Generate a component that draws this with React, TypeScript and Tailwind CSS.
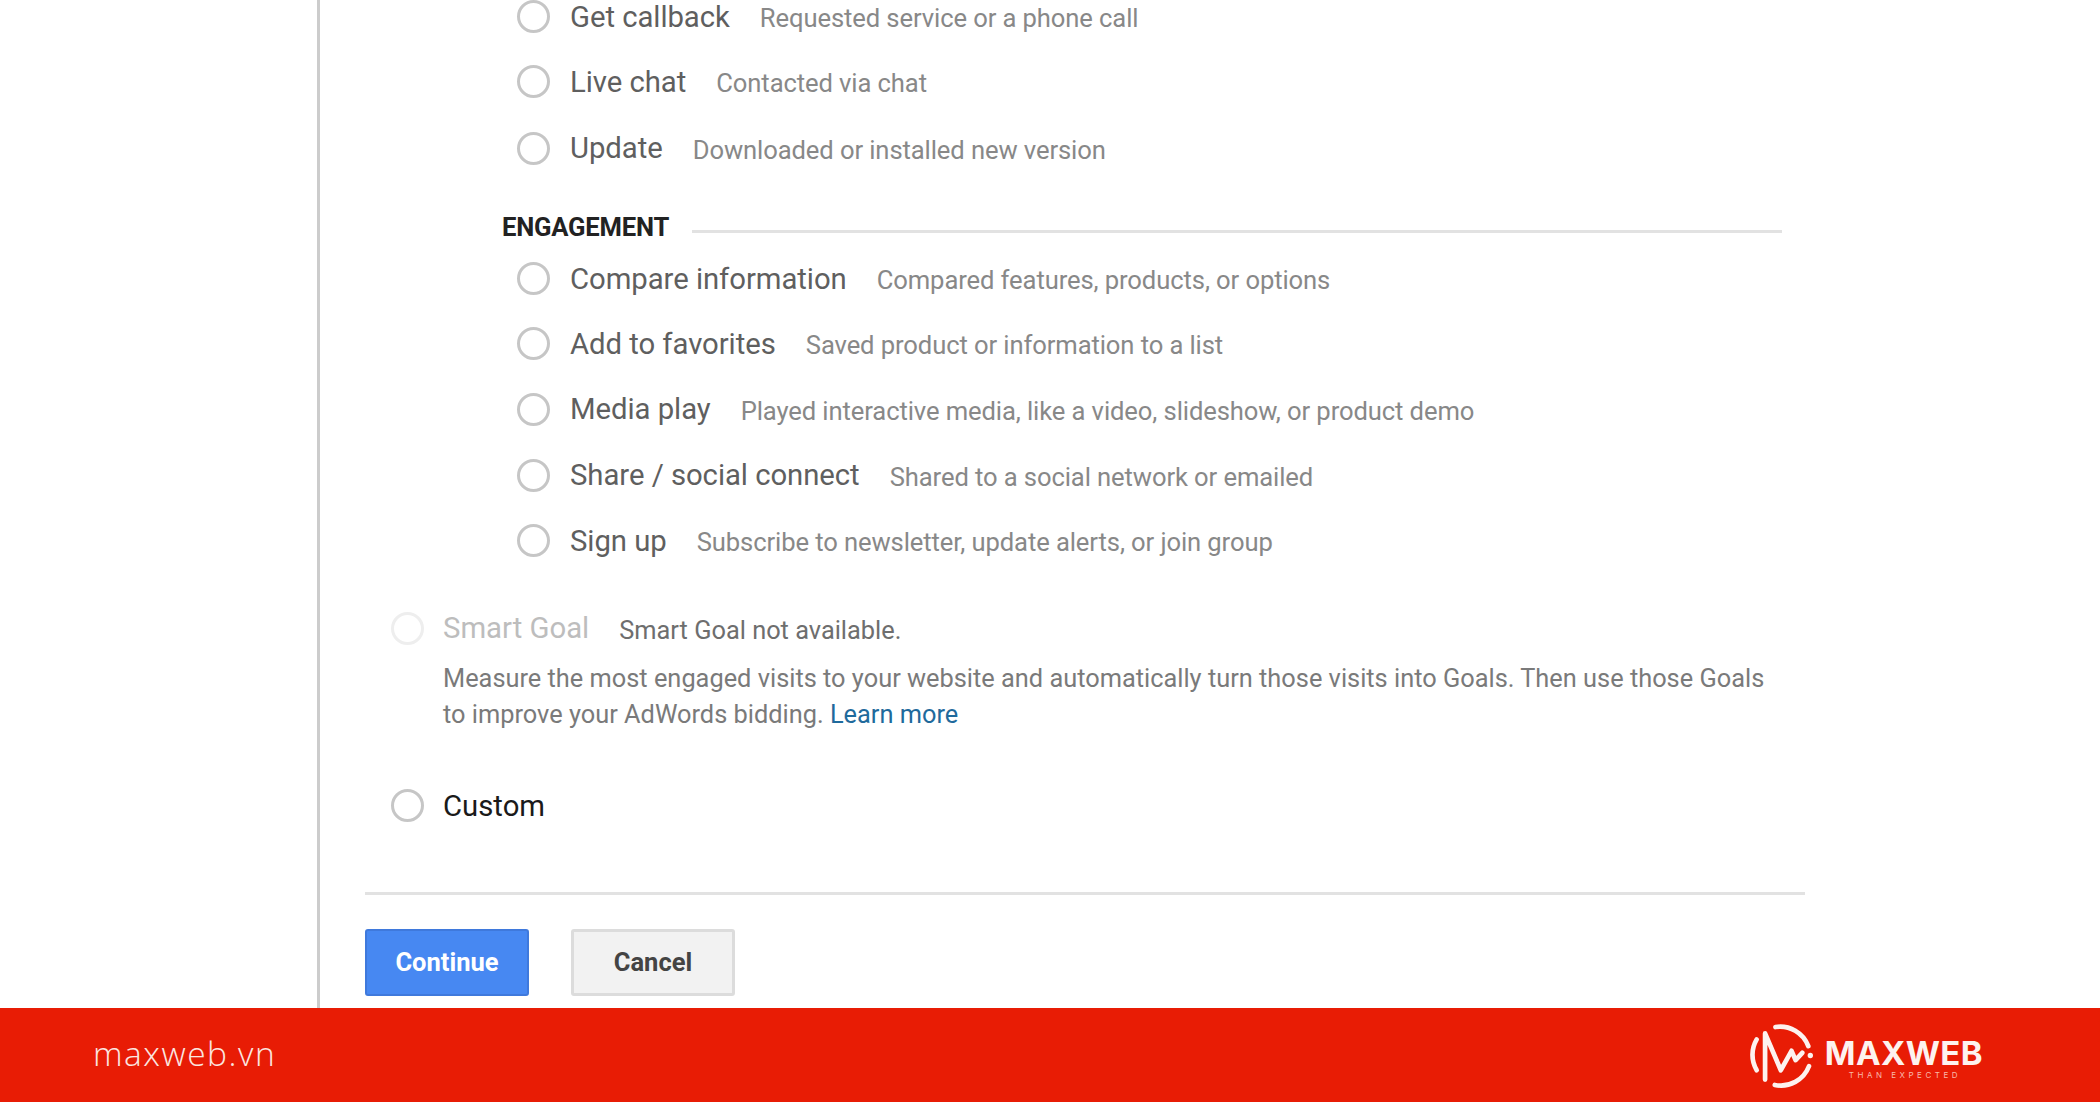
function Radio({ faint = false }: { faint?: boolean }) {
  return (
    <span
      className={`block h-[33px] w-[33px] shrink-0 rounded-full border-[3px] bg-white ${
        faint ? "border-[#eeeeee]" : "border-[#c6c6c6]"
      }`}
    />
  );
}

function Row({ label, desc, h }: { label: string; desc: string; h: string }) {
  return (
    <div className={`flex items-center pl-[15px] ${h}`}>
      <Radio />
      <span className="ml-[20px] mt-[2px] text-[29.3px] tracking-[-0.05px] text-[#5f5f5f]">{label}</span>
      <span className="ml-[30px] mt-[4px] text-[25.6px] tracking-[-0.1px] text-[#888888]">{desc}</span>
    </div>
  );
}

function Logo() {
  return (
    <svg viewBox="150 60 200 200" className="h-[67px] w-[67px] shrink-0" fill="none" stroke="#fdf2ef" strokeLinecap="round" strokeLinejoin="round">
      <path d="M232 75 A 90 90 0 0 1 330 132" strokeWidth="14" />
      <path d="M230 248 A 90 90 0 0 0 332 192" strokeWidth="14" />
      <path d="M176 112 A 90 90 0 0 0 176 204" strokeWidth="14" />
      <path d="M201 232 V 94 L 248 204 L 280 146 L 292 174 L 312 152" strokeWidth="14" />
      <circle cx="336" cy="160" r="8" fill="#fdf2ef" stroke="none" />
    </svg>
  );
}

export default function App() {
  return (
    <div className="flex h-[1102px] w-[2100px] flex-col overflow-hidden bg-white font-['Roboto',sans-serif]">
      <main className="flex min-h-0 flex-1">
        <aside className="h-full w-[320px] shrink-0 border-r-[3px] border-[#cccccc]" />
        <section className="w-[1485px] pl-[45px]">
          <div className="-mt-[16px] pl-[137px] pr-[23px]">
            <Row label="Get callback" desc="Requested service or a phone call" h="h-[65px]" />
            <Row label="Live chat" desc="Contacted via chat" h="h-[65px]" />
            <Row label="Update" desc="Downloaded or installed new version" h="h-[68px]" />
            <div className="mt-[29px] flex h-[32px] items-center">
              <span className="text-[25.6px] font-bold tracking-[-0.2px] text-[#222222]">ENGAGEMENT</span>
              <span className="ml-[23px] mt-[8px] h-[3px] flex-1 bg-[#e2e2e2]" />
            </div>
            <div className="mt-[3px]">
              <Row label="Compare information" desc="Compared features, products, or options" h="h-[65px]" />
              <Row label="Add to favorites" desc="Saved product or information to a list" h="h-[65px]" />
              <Row label="Media play" desc="Played interactive media, like a video, slideshow, or product demo" h="h-[66px]" />
              <Row label="Share / social connect" desc="Shared to a social network or emailed" h="h-[66px]" />
              <Row label="Sign up" desc="Subscribe to newsletter, update alerts, or join group" h="h-[65px]" />
            </div>
          </div>

          <div className="mt-[23px] pl-[26px]">
            <div className="flex h-[64px] items-center">
              <Radio faint />
              <span className="ml-[19px] mt-[2px] text-[29.3px] text-[#bdbdbd]">Smart Goal</span>
              <span className="ml-[30px] mt-[4px] text-[25.37px] text-[#6e6e6e]">Smart Goal not available.</span>
            </div>
            <p className="ml-[52px] whitespace-nowrap text-[25.37px] leading-[36px] text-[#7a7a7a]">
              Measure the most engaged visits to your website and automatically turn those visits into Goals. Then use those Goals
              <br />
              to improve your AdWords bidding. <span className="text-[#1f6a9c]">Learn more</span>
            </p>
            <div className="mt-[41px] flex h-[64px] items-center">
              <Radio />
              <span className="ml-[19px] mt-[3px] text-[29.3px] text-[#1a1a1a]">Custom</span>
            </div>
          </div>

          <div className="mt-[55px] h-[3px] bg-[#e2e2e2]" />

          <div className="mt-[34px] flex gap-[42px]">
            <button className="flex h-[67px] w-[164px] items-center justify-center rounded-[3px] border-2 border-[#3f79dc] bg-[#4788f2] text-[25.5px] font-bold text-white">
              Continue
            </button>
            <button className="flex h-[67px] w-[164px] items-center justify-center rounded-[3px] border-[3px] border-[#dcdcdc] bg-[#f2f2f2] text-[25.5px] font-bold text-[#444444]">
              Cancel
            </button>
          </div>
        </section>
      </main>

      <footer className="flex h-[94px] shrink-0 items-center justify-between bg-[#e81c05] pl-[93px] pr-[117px]">
        <span className="-mt-[3px] font-['Open_Sans',sans-serif] text-[33.5px] font-light tracking-[1.5px] text-[#fbe6e0]">maxweb.vn</span>
        <div className="flex items-center gap-[10px]">
          <Logo />
          <div className="mt-[5px] flex flex-col items-end">
            <span className="font-['Inter',sans-serif] text-[33px] leading-[34px] font-bold tracking-[0.4px] text-[#fdf2ef]">MAXWEB</span>
            <span className="mr-[22px] font-['Inter',sans-serif] text-[8px] leading-[10px] tracking-[3.5px] text-[#f8b9ab]">THAN EXPECTED</span>
          </div>
        </div>
      </footer>
    </div>
  );
}
